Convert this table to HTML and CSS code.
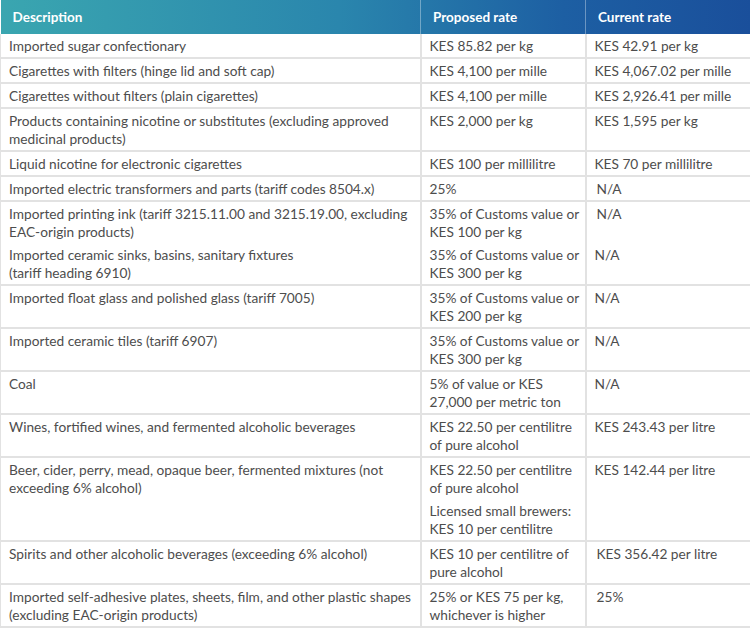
FILE: index.html
```html
<!DOCTYPE html>
<html>
<head>
<meta charset="utf-8">
<link rel="stylesheet" href="styles.css">
</head>
<body>
<table class="rates">
  <colgroup><col class="c1"><col class="c2"><col class="c3"></colgroup>
  <thead>
    <tr><th>Description</th><th>Proposed rate</th><th>Current rate</th></tr>
  </thead>
  <tbody>
    <tr><td>Imported sugar confectionary</td><td>KES 85.82 per kg</td><td>KES 42.91 per kg</td></tr>
    <tr><td>Cigarettes with filters (hinge lid and soft cap)</td><td>KES 4,100 per mille</td><td>KES 4,067.02 per mille</td></tr>
    <tr><td>Cigarettes without filters (plain cigarettes)</td><td>KES 4,100 per mille</td><td>KES 2,926.41 per mille</td></tr>
    <tr><td class="nw">Products containing nicotine or substitutes (excluding approved<br>medicinal products)</td><td>KES 2,000 per kg</td><td>KES 1,595 per kg</td></tr>
    <tr><td>Liquid nicotine for electronic cigarettes</td><td>KES 100 per millilitre</td><td>KES 70 per millilitre</td></tr>
    <tr><td>Imported electric transformers and parts (tariff codes 8504.x)</td><td>25%</td><td class="ind">N/A</td></tr>
    <tr class="nob"><td class="nw">Imported printing ink (tariff 3215.11.00 and 3215.19.00, excluding<br>EAC-origin products)</td><td class="nw">35% of Customs value or<br>KES 100 per kg</td><td class="ind">N/A</td></tr>
    <tr><td class="nw">Imported ceramic sinks, basins, sanitary fixtures<br>(tariff heading 6910)</td><td class="nw">35% of Customs value or<br>KES 300 per kg</td><td>N/A</td></tr>
    <tr><td>Imported float glass and polished glass (tariff 7005)</td><td class="nw">35% of Customs value or<br>KES 200 per kg</td><td>N/A</td></tr>
    <tr><td>Imported ceramic tiles (tariff 6907)</td><td class="nw">35% of Customs value or<br>KES 300 per kg</td><td>N/A</td></tr>
    <tr><td>Coal</td><td class="nw">5% of value or KES<br>27,000 per metric ton</td><td>N/A</td></tr>
    <tr><td>Wines, fortified wines, and fermented alcoholic beverages</td><td class="nw">KES 22.50 per centilitre<br>of pure alcohol</td><td>KES 243.43 per litre</td></tr>
    <tr><td class="nw">Beer, cider, perry, mead, opaque beer, fermented mixtures (not<br>exceeding 6% alcohol)</td><td class="nw"><p class="para">KES 22.50 per centilitre<br>of pure alcohol</p><p class="para">Licensed small brewers:<br>KES 10 per centilitre</p></td><td>KES 142.44 per litre</td></tr>
    <tr><td>Spirits and other alcoholic beverages (exceeding 6% alcohol)</td><td class="nw">KES 10 per centilitre of<br>pure alcohol</td><td class="ind">KES 356.42 per litre</td></tr>
    <tr><td class="nw">Imported self-adhesive plates, sheets, film, and other plastic shapes<br>(excluding EAC-origin products)</td><td class="nw">25% or KES 75 per kg,<br>whichever is higher</td><td class="ind">25%</td></tr>
  </tbody>
</table>
</body>
</html>
```

FILE: styles.css
```css
html, body {
  margin: 0;
  padding: 0;
  background: #ffffff;
}
.rates {
  width: 750px;
  border-collapse: collapse;
  table-layout: fixed;
  font-family: "Lato", "Open Sans", sans-serif;
  font-size: 13.7px;
  line-height: 18px;
  color: #4d4d4d;
}
.c1 { width: 420px; }
.c2 { width: 165px; }
.c3 { width: 165px; }
.rates thead tr {
  background: linear-gradient(90deg, #3aa6b0 0%, #2a86ad 45%, #1d5fa3 75%, #1a4f9b 100%);
}
.rates th {
  text-align: left;
  color: #ffffff;
  font-weight: 700;
  font-size: 13.5px;
  height: 34px;
  padding: 0 8px 0 12px;
  border-left: 1px solid rgba(255,255,255,0.35);
}
.rates th:first-child { border-left: none; }
.rates td {
  vertical-align: top;
  padding: 3px 8px 2px 8px;
  border: 2px solid #e2e2e2;
  border-top: none;
}
.rates td:first-child { border-left: 1px solid #e2e2e2; }
.rates td:last-child { border-right: none; }
.rates td.nw { white-space: nowrap; }
.rates tr.nob td { border-bottom: none; }
.rates td.ind { padding-left: 10px; }
.para { margin: 0; }
.para + .para { margin-top: 5px; }
```
